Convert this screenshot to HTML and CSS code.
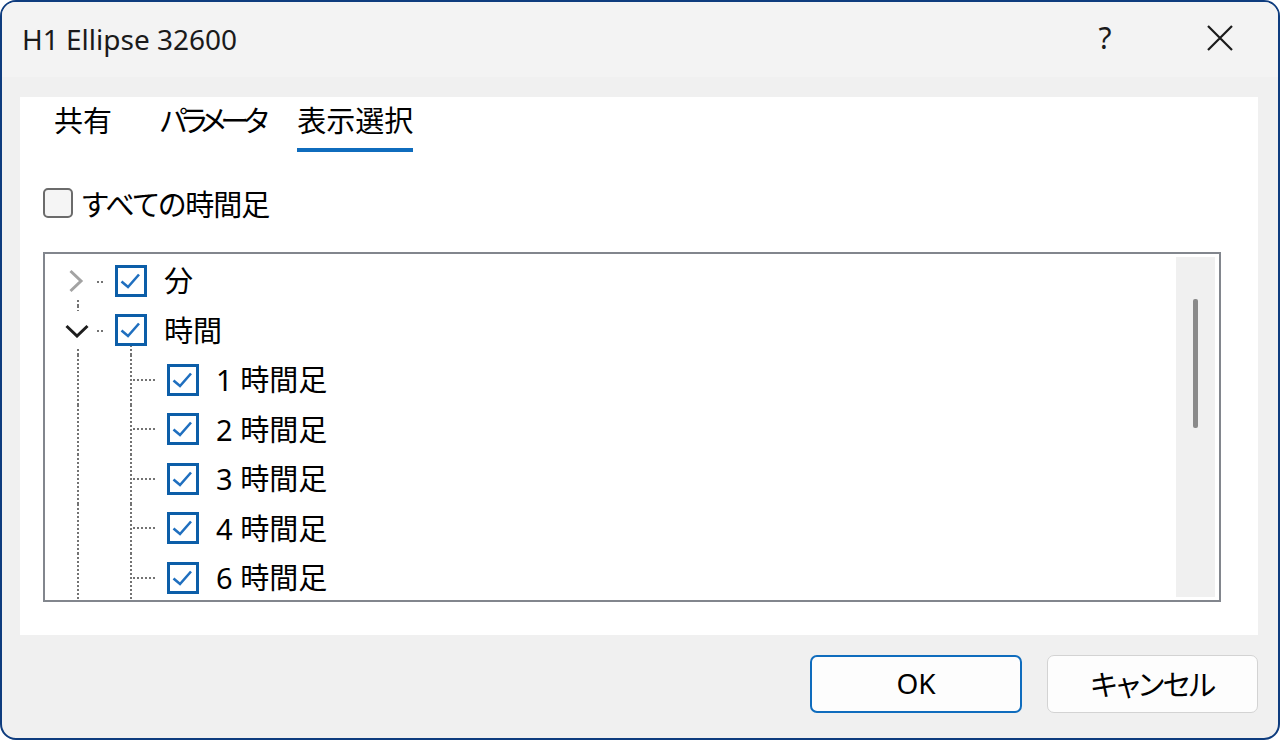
FILE: index.html
```html
<!DOCTYPE html>
<html lang="ja">
<head>
<meta charset="utf-8">
<title>H1 Ellipse 32600</title>
<link rel="stylesheet" href="styles.css">
</head>
<body>
<div class="window">
  <div class="titlebar">
    <div class="title">H1 Ellipse 32600</div>
    <div class="help">?</div>
    <div class="close">
      <svg width="26" height="26" viewBox="0 0 26 26"><path d="M1 1 L25 25 M25 1 L1 25" stroke="#1a1a1a" stroke-width="2.2" fill="none"/></svg>
    </div>
  </div>

  <div class="panel">
    <div class="tabs">
      <div class="tab tab-share">共有</div>
      <div class="tab tab-param">パラメータ</div>
      <div class="tab active">表示選択</div>
    </div>

    <label class="allrow">
      <span class="cb-empty"></span>
      <span class="jp alltext">すべての時間足</span>
    </label>

    <div class="treebox">
      <div class="tree">
        <div class="row">
          <div class="gut-a">
            <div class="seg"></div>
            <div class="expander"><svg class="chev-r" width="16" height="24" viewBox="0 0 16 24"><path d="M2.5 2 L13 12 L2.5 22" stroke="#a3a3a3" stroke-width="3" fill="none"/></svg></div>
            <div class="seg vline"></div>
          </div>
          <div class="hdots short"></div>
          <div class="cbcell"><div class="seg"></div><span class="cb"><svg width="26" height="26" viewBox="0 0 26 26"><path d="M3.5 13.5 L10 19 L21 6.5" stroke="#1f6fbf" stroke-width="2.6" fill="none"/></svg></span><div class="seg"></div></div>
          <span class="label jp">分</span>
        </div>

        <div class="row">
          <div class="gut-a">
            <div class="seg vline"></div>
            <div class="expander"><svg class="chev-d" width="24" height="14" viewBox="0 0 24 14"><path d="M1.5 2 L12 12 L22.5 2" stroke="#1e1e1e" stroke-width="3" fill="none"/></svg></div>
            <div class="seg vline"></div>
          </div>
          <div class="hdots short"></div>
          <div class="cbcell"><div class="seg"></div><span class="cb"><svg width="26" height="26" viewBox="0 0 26 26"><path d="M3.5 13.5 L10 19 L21 6.5" stroke="#1f6fbf" stroke-width="2.6" fill="none"/></svg></span><div class="seg vline15"></div></div>
          <span class="label jp">時間</span>
        </div>

        <div class="row child">
          <div class="gut-a vline"></div>
          <div class="gut-b"></div>
          <div class="hdots long"></div>
          <div class="cbcell"><div class="seg"></div><span class="cb"><svg width="26" height="26" viewBox="0 0 26 26"><path d="M3.5 13.5 L10 19 L21 6.5" stroke="#1f6fbf" stroke-width="2.6" fill="none"/></svg></span><div class="seg"></div></div>
          <span class="label clabel jp">1 時間足</span>
        </div>

        <div class="row child">
          <div class="gut-a vline"></div>
          <div class="gut-b"></div>
          <div class="hdots long"></div>
          <div class="cbcell"><div class="seg"></div><span class="cb"><svg width="26" height="26" viewBox="0 0 26 26"><path d="M3.5 13.5 L10 19 L21 6.5" stroke="#1f6fbf" stroke-width="2.6" fill="none"/></svg></span><div class="seg"></div></div>
          <span class="label clabel jp">2 時間足</span>
        </div>

        <div class="row child">
          <div class="gut-a vline"></div>
          <div class="gut-b"></div>
          <div class="hdots long"></div>
          <div class="cbcell"><div class="seg"></div><span class="cb"><svg width="26" height="26" viewBox="0 0 26 26"><path d="M3.5 13.5 L10 19 L21 6.5" stroke="#1f6fbf" stroke-width="2.6" fill="none"/></svg></span><div class="seg"></div></div>
          <span class="label clabel jp">3 時間足</span>
        </div>

        <div class="row child">
          <div class="gut-a vline"></div>
          <div class="gut-b"></div>
          <div class="hdots long"></div>
          <div class="cbcell"><div class="seg"></div><span class="cb"><svg width="26" height="26" viewBox="0 0 26 26"><path d="M3.5 13.5 L10 19 L21 6.5" stroke="#1f6fbf" stroke-width="2.6" fill="none"/></svg></span><div class="seg"></div></div>
          <span class="label clabel jp">4 時間足</span>
        </div>

        <div class="row child">
          <div class="gut-a vline"></div>
          <div class="gut-b"></div>
          <div class="hdots long"></div>
          <div class="cbcell"><div class="seg"></div><span class="cb"><svg width="26" height="26" viewBox="0 0 26 26"><path d="M3.5 13.5 L10 19 L21 6.5" stroke="#1f6fbf" stroke-width="2.6" fill="none"/></svg></span><div class="seg"></div></div>
          <span class="label clabel jp">6 時間足</span>
        </div>
      </div>
      <div class="scrolltrack"><div class="thumb"></div></div>
    </div>
  </div>

  <div class="buttons">
    <button class="btn primary">OK</button>
    <button class="btn jp cancel">キャンセル</button>
  </div>
</div>
</body>
</html>
```

FILE: styles.css
```css
* { box-sizing: border-box; }

html, body {
  margin: 0;
  padding: 0;
  background: #ffffff;
}

body {
  font-family: "Noto Sans", "Noto Sans CJK JP", sans-serif;
  color: #000;
}

.jp {
  font-family: "Noto Sans", "Noto Sans CJK JP", sans-serif;
  font-feature-settings: "palt";
}

.window {
  width: 1280px;
  height: 740px;
  border: 2px solid #0e3c7e;
  border-radius: 16px;
  background: #f0f0f0;
  overflow: hidden;
  display: flex;
  flex-direction: column;
}

/* Title bar */
.titlebar {
  height: 75px;
  flex: none;
  background: #f3f3f3;
  display: flex;
  align-items: center;
  padding-left: 20px;
}

.title {
  font-size: 28px;
  color: #1a1a1a;
  flex: 1;
  line-height: 1;
  padding-bottom: 2px;
}

.help {
  width: 46px;
  text-align: center;
  font-size: 30px;
  line-height: 1;
  color: #1a1a1a;
  padding-bottom: 4px;
}

.close {
  width: 48px;
  margin-left: 68px;
  margin-right: 34px;
  display: flex;
  justify-content: center;
  align-items: center;
  padding-bottom: 4px;
}

/* Panel */
.panel {
  margin: 20px 20px 0 18px;
  height: 538px;
  background: #ffffff;
  flex: none;
}

.tabs {
  display: flex;
  padding: 6px 0 0 34px;
}

.tab {
  font-size: 29px;
  line-height: 36px;
  padding-bottom: 9px;
  border-bottom: 4px solid transparent;
  font-feature-settings: "palt";
  color: #000;
}

.tab-share {
  margin-right: 48px;
}

.tab-param {
  letter-spacing: -5.5px;
  margin-right: 34px;
}

.tab.active {
  border-bottom-color: #0f6cbd;
}

.allrow {
  display: flex;
  align-items: center;
  margin: 36px 0 0 23px;
  height: 30px;
  font-size: 29px;
}

.alltext {
  letter-spacing: -1px;
}

.cb-empty {
  width: 30px;
  height: 30px;
  border: 2px solid #6b6b6b;
  border-radius: 5px;
  background: #f5f5f5;
  margin-right: 9px;
  flex: none;
}

/* Tree box */
.treebox {
  margin: 34px 0 0 23px;
  width: 1178px;
  height: 350px;
  border: 2px solid #82868d;
  display: flex;
  background: #fff;
}

.tree {
  flex: 1;
  padding-top: 2px;
  overflow: hidden;
}

.row {
  display: flex;
  height: 49.5px;
  align-items: stretch;
}

.gut-a {
  width: 51px;
  flex: none;
  display: flex;
  flex-direction: column;
}

.seg {
  flex: 1;
}

.vline {
  background: linear-gradient(#737373 50%, transparent 50%) 32px 0 / 2px 4px repeat-y;
}

.vline15 {
  flex: 1;
  background: linear-gradient(#737373 50%, transparent 50%) 15px 3px / 2px 4px repeat-y;
}

.expander {
  height: 38px;
  flex: none;
  display: flex;
  align-items: center;
  background: #fff;
}

.chev-r { margin-left: 23px; }
.chev-d { margin-left: 20px; margin-top: 2px; }

.gut-b {
  width: 36px;
  flex: none;
  background: linear-gradient(#737373 50%, transparent 50%) 34px 0 / 2px 4px repeat-y;
}

.hdots {
  align-self: center;
  height: 2px;
  flex: none;
  background: linear-gradient(to right, #737373 50%, transparent 50%) 0 0 / 4px 2px repeat-x;
}

.hdots.short {
  width: 8px;
  margin: 2px 10px 0 1px;
}

.hdots.long {
  width: 24px;
  margin: 0 10px 0 1px;
}

.cbcell {
  width: 32px;
  flex: none;
  display: flex;
  flex-direction: column;
}

.cb {
  width: 32px;
  height: 32px;
  flex: none;
  border: 3px solid #0c5ea8;
  background: #fff;
  display: block;
}

.cb svg { display: block; }

.label {
  align-self: center;
  font-size: 29px;
  line-height: 1;
  margin-left: 17px;
  white-space: nowrap;
}

.clabel {
  margin-left: 17px;
}

.scrolltrack {
  width: 39px;
  flex: none;
  margin: 3px 4px 3px 0;
  background: #f0f0f0;
  padding: 42px 0 0 17px;
}

.thumb {
  width: 5px;
  height: 129px;
  background: #8a8a8a;
  border-radius: 2px;
}

/* Buttons */
.buttons {
  display: flex;
  justify-content: flex-end;
  gap: 25px;
  margin: 20px 20px 0 0;
}

.btn {
  width: 212px;
  height: 58px;
  border: 1px solid #d3d3d3;
  border-radius: 7px;
  background: #fdfdfd;
  font-size: 28px;
  color: #000;
  font-family: "Noto Sans", "Noto Sans CJK JP", sans-serif;
  padding: 0 0 2px 0;
}

.btn.cancel {
  width: 211px;
  font-size: 29px;
  letter-spacing: -1.5px;
}

.btn.primary {
  border: 2px solid #0f6cbd;
}
```
